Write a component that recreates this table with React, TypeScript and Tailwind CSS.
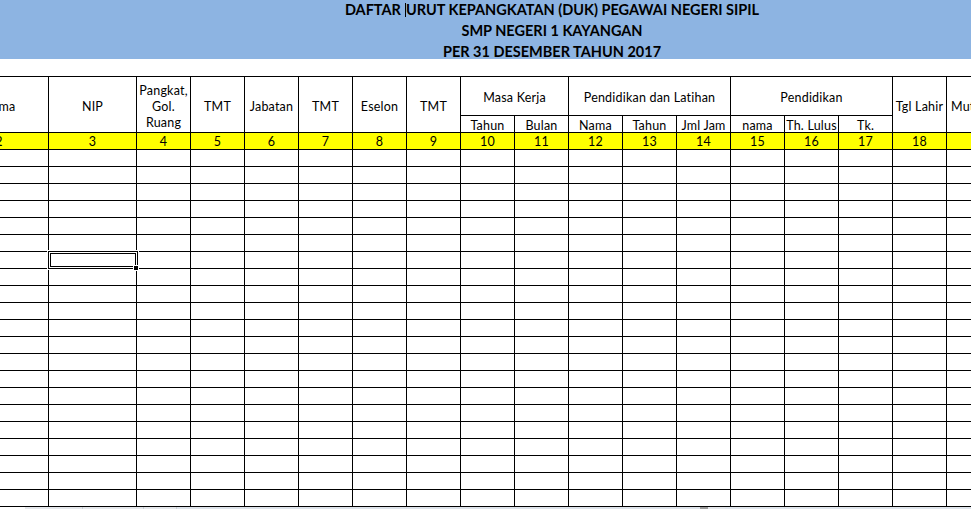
import React from "react";

const cell = "border-r border-b border-black flex items-center justify-center text-center leading-[17px]";

const singles: { label: React.ReactNode; cls?: string }[] = [
  { label: "Nama" },
  { label: "NIP" },
  { label: (<span className="leading-[16px]">Pangkat,<br />Gol.<br />Ruang</span>) },
  { label: "TMT" },
  { label: "Jabatan" },
  { label: "TMT" },
  { label: "Eselon" },
  { label: "TMT" },
];

const subs = ["Tahun", "Bulan", "Nama", "Tahun", "Jml Jam", "nama", "Th. Lulus", "Tk."];

const numbers = Array.from({ length: 18 }, (_, i) => String(i + 2));

const SelectedBox = () => (
  <>
    <div className="absolute -left-[2px] -top-[2px] w-[92px] h-[20px] border border-white">
      <div className="h-full border border-black">
        <div className="h-full border border-white">
          <div className="h-full border border-black" />
        </div>
      </div>
    </div>
    <div className="absolute left-[84px] top-[13px] w-[6px] h-[6px] bg-black border border-white" />
  </>
);

export default function App() {
  return (
    <div className="w-[971px] h-[510px] overflow-hidden bg-white text-black font-['Lato','Liberation_Sans',sans-serif]">
      <div className="h-[60px] bg-[#8db4e2] pl-[133px] text-[14.5px] font-bold leading-[21px]">
        <div className="-mt-[1px] flex flex-col items-center">
          <div>
            DAFTAR
            <span className="inline-block w-[5px] h-[14px] align-[-2px] border-r border-black" />
            URUT KEPANGKATAN (DUK) PEGAWAI NEGERI SIPIL
          </div>
          <div>SMP NEGERI 1 KAYANGAN</div>
          <div>PER 31 DESEMBER TAHUN 2017</div>
        </div>
      </div>
      <div className="h-[17px]" />
      <div className="-ml-[51px] w-max grid grid-cols-[99px_88px_repeat(15,54px)_80px] grid-rows-[39px_17px_17px_repeat(21,17px)] border-t border-l border-black text-[12.5px] tracking-[0.2px]">
        {singles.map((s, i) => (
          <div key={"s" + i} className={`${cell} row-span-2 pt-[4px]`}>
            {s.label}
          </div>
        ))}
        <div className={`${cell} col-span-2 pt-[2px]`}>Masa Kerja</div>
        <div className={`${cell} col-span-3 pt-[2px]`}>Pendidikan dan Latihan</div>
        <div className={`${cell} col-span-3 pt-[2px]`}>Pendidikan</div>
        <div className={`${cell} row-span-2 pt-[4px]`}>Tgl Lahir</div>
        <div className={`${cell} row-span-2 pt-[4px] !justify-start pl-[4px] whitespace-nowrap overflow-hidden`}>Mutasi</div>
        {subs.map((s, i) => (
          <div key={"u" + i} className={`${cell} pt-[2px]`}>
            {s}
          </div>
        ))}
        {numbers.map((n) => (
          <div key={"n" + n} className={`${cell} bg-[#ffff00] pt-px`}>
            {n}
          </div>
        ))}
        {Array.from({ length: 21 * 18 }, (_, i) => {
          const row = Math.floor(i / 18);
          const col = i % 18;
          const selected = row === 6 && col === 1;
          return (
            <div key={"d" + i} className={`${cell} ${selected ? "relative" : ""}`}>
              {selected && <SelectedBox />}
            </div>
          );
        })}
      </div>
      <div className="flex h-[2px]">
        <div className="w-[25px]" />
        <div className="w-[58px] bg-[#e4e7eb] border-r border-[#c9ced4]" />
        <div className="w-[61px] bg-[#e4e7eb] border-r border-[#c9ced4]" />
        <div className="w-[33px] bg-[#e4e7eb] border-r border-[#c9ced4]" />
        <div className="w-[523px] bg-[#dde3ea]" />
        <div className="w-[8px] bg-[#9a9a9a]" />
        <div className="w-[17px] bg-[#e4e7eb]" />
        <div className="flex-1 bg-[#dfe5ec]" />
      </div>
    </div>
  );
}
